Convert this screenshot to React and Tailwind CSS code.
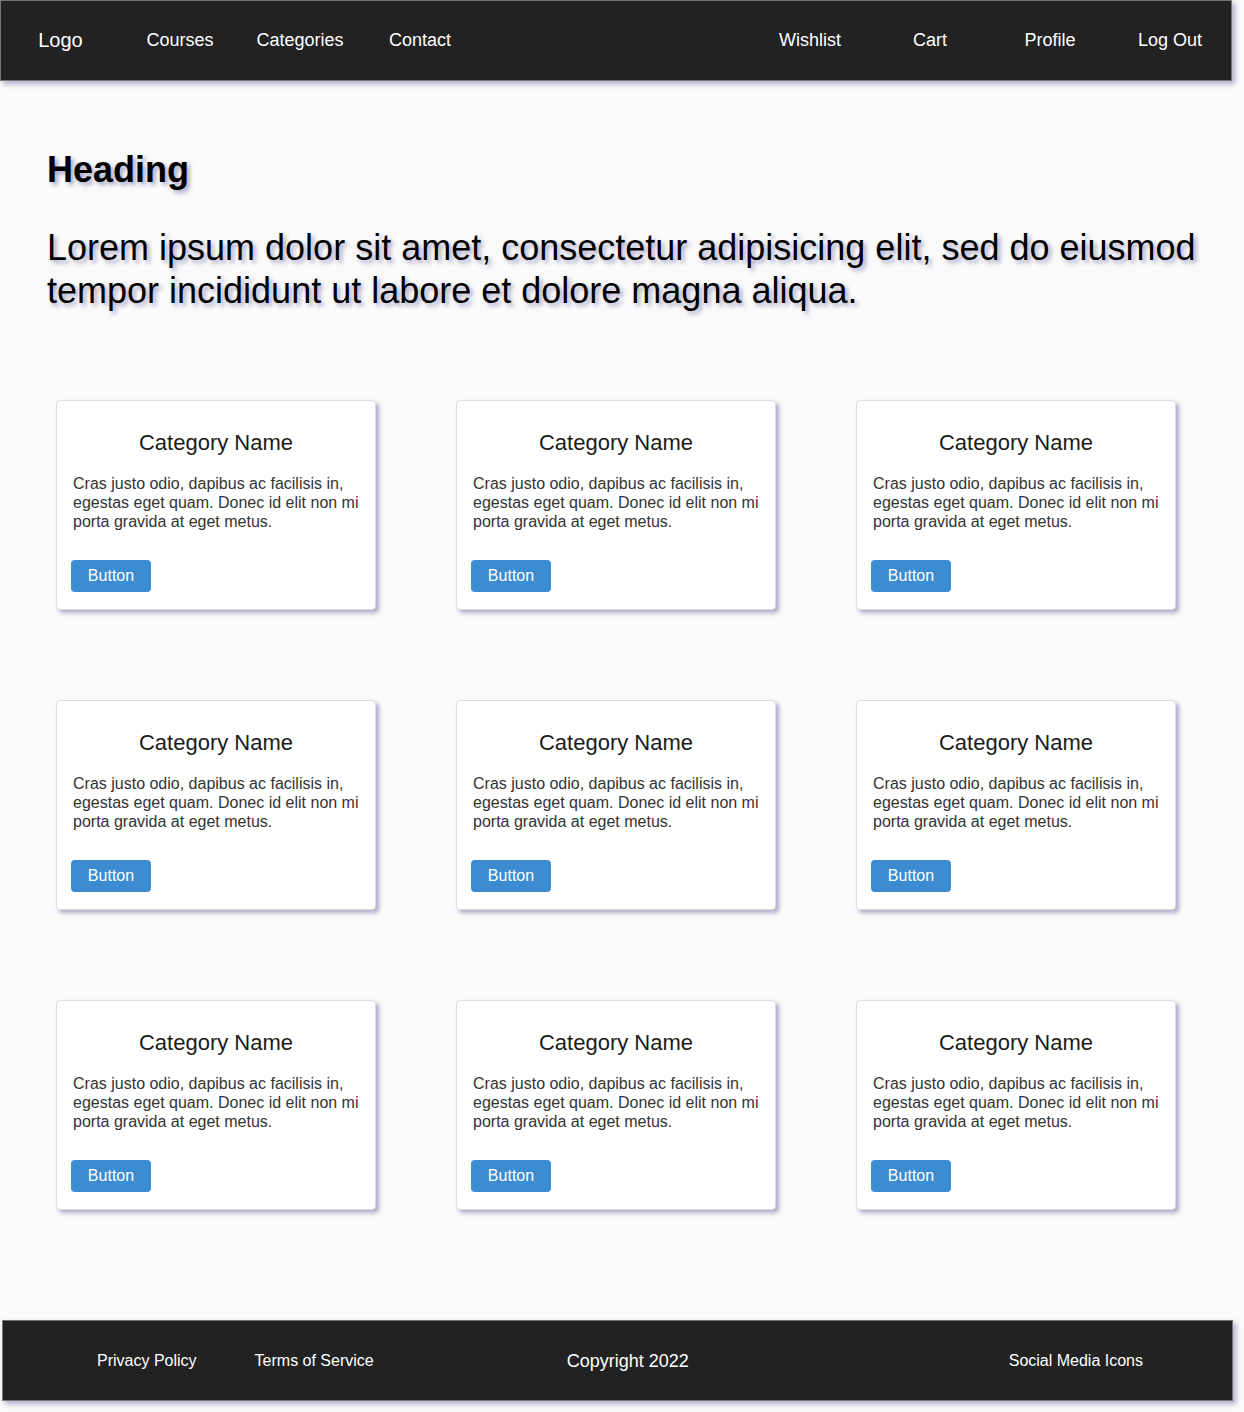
import React from 'react';

const leftLinks = ['Courses', 'Categories', 'Contact'];
const rightLinks = ['Wishlist', 'Cart', 'Profile', 'Log Out'];

function CategoryCard() {
  return (
    <div className="h-[210px] w-[320px] bg-white border border-[#dcdcdc] rounded-[4px] shadow-[3px_3px_4px_rgba(110,110,160,0.55)] flex flex-col pt-[29px] px-[15px]">
      <h3 className="text-[22px] leading-[25px] text-center text-[#1a1a1a]">Category Name</h3>
      <p className="mt-[19px] pl-px text-[16px] leading-[19px] text-[#333333]">
        Cras justo odio, dapibus ac facilisis in, egestas eget quam. Donec id elit non mi porta gravida at eget metus.
      </p>
      <div className="mt-[29px] -ml-[1px]">
        <button className="h-[32px] w-[80px] rounded-[4px] bg-[#3d8bd0] text-white text-[16px] leading-none">
          Button
        </button>
      </div>
    </div>
  );
}

export default function App() {
  const cards = Array.from({ length: 9 });

  return (
    <div className="min-h-[1412px] bg-[#fafafa] font-['Liberation_Sans',Arial,sans-serif] overflow-hidden">
      {/* Navbar */}
      <nav className="w-[1232px] h-[81px] bg-[#222222] border border-[#777777] shadow-[3px_3px_5px_rgba(100,100,150,0.5)] flex items-center text-white pb-px">
        <div className="w-[119px] text-center text-[20px] leading-none">Logo</div>
        {leftLinks.map((l) => (
          <a key={l} href="#" className="w-[120px] text-center text-[18px] leading-none">{l}</a>
        ))}
        <div className="ml-auto flex items-center">
          {rightLinks.map((l) => (
            <a key={l} href="#" className="w-[120px] text-center text-[18px] leading-none">{l}</a>
          ))}
          <div className="w-px" />
        </div>
      </nav>

      {/* Main */}
      <main className="pt-[68px] px-[47px]">
        <h1 className="text-[36px] leading-[41px] font-bold text-black [text-shadow:3px_3px_4px_rgba(100,100,160,0.55)]">
          Heading
        </h1>
        <p className="mt-[36px] text-[36px] leading-[43px] text-black [text-shadow:3px_3px_4px_rgba(100,100,160,0.55)]">
          Lorem ipsum dolor sit amet, consectetur adipisicing elit, sed do eiusmod tempor incididunt ut labore et dolore magna aliqua.
        </p>

        <div className="mt-[88px] ml-[9px] grid grid-cols-[320px_320px_320px] gap-x-[80px] gap-y-[90px]">
          {cards.map((_, i) => (
            <CategoryCard key={i} />
          ))}
        </div>
      </main>

      {/* Footer */}
      <footer className="mt-[110px] ml-[2px] w-[1231px] h-[81px] bg-[#222222] border border-[#777777] shadow-[3px_3px_5px_rgba(100,100,150,0.5)] flex items-center text-white">
        <a href="#" className="ml-[94px] text-[16px] leading-none">Privacy Policy</a>
        <a href="#" className="ml-[58px] text-[16px] leading-none">Terms of Service</a>
        <span className="ml-[193px] text-[18px] leading-none">Copyright 2022</span>
        <span className="ml-auto mr-[89px] text-[16px] leading-none">Social Media Icons</span>
      </footer>
    </div>
  );
}
